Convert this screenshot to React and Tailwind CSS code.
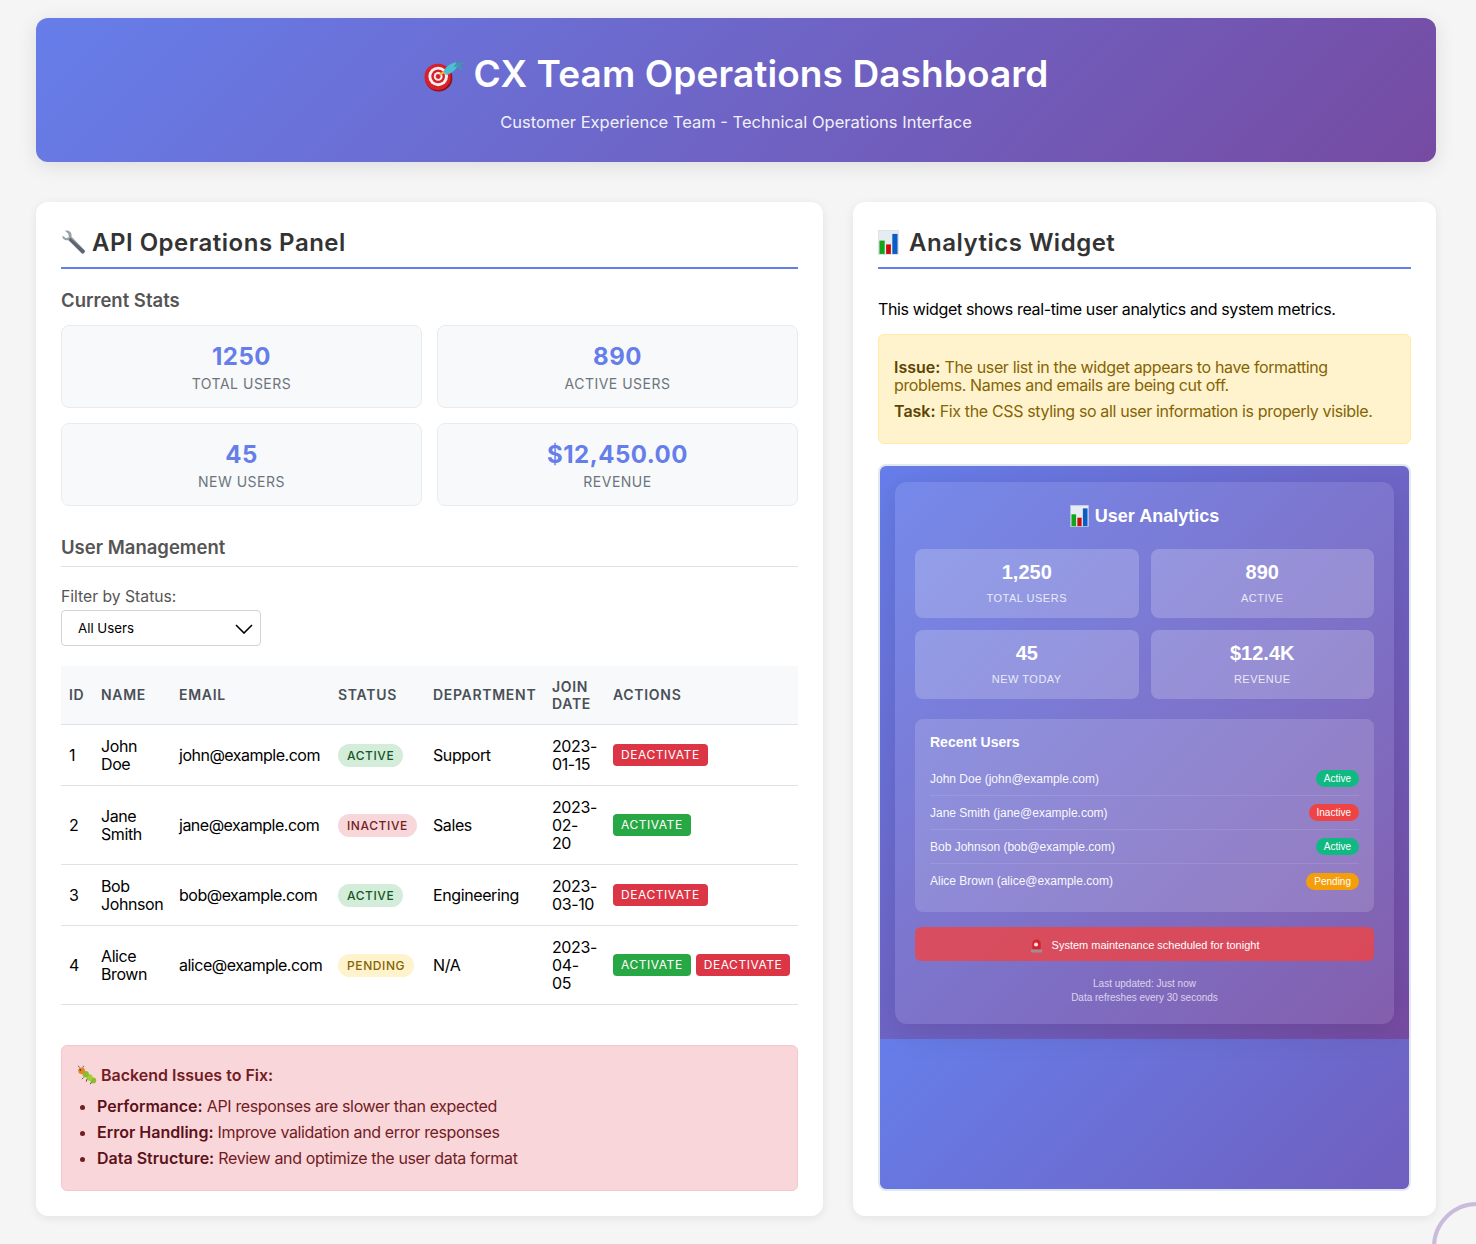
import React from "react";

const sans = "font-['Inter','Noto_Sans',sans-serif]";

const TargetIcon = ({ className }) => (
  <svg viewBox="0 0 44 36" className={className}>
    <circle cx="15" cy="22" r="14" fill="#8f0f14" />
    <circle cx="14" cy="21" r="13.500" fill="#d9202a" />
    <circle cx="14.500" cy="20.500" r="10" fill="#f7f1f1" />
    <circle cx="14.500" cy="20.500" r="7" fill="#d9202a" />
    <circle cx="14.500" cy="20.500" r="4.500" fill="#f7f1f1" />
    <circle cx="14.500" cy="20.500" r="2.500" fill="#d9202a" />
    <path d="M16 19l5-3.500" stroke="#e8b93a" strokeWidth="2.200" />
    <path d="M20 15c3-5 7-8 13-9l1.500 3c-2 5-7 9-12 10z" fill="#4cc0cf" />
    <path d="M31 1l3 6 9-1-6 3 3 6-7-5-3 1 3-4z" fill="#3d9aa8" />
  </svg>
);

const WrenchIcon = ({ className }) => (
  <svg viewBox="0 0 24 24" className={className}>
    <path d="M1.500 5.500L5 8l2.500-1L7 3.500 3.800.8C6.500-.2 9.300 1 10 3.800c.2.900.2 1.700 0 2.500l13 13.400c.9 1-1.800 3.700-2.800 2.800L7 9.800c-.9.2-1.800.2-2.700-.1C2 8.900 1 7.500 1.500 5.500z" fill="#98a0a8" />
    <path d="M9 7.500l13.800 12.300c.6 1-1.700 3.500-2.600 2.700L7.500 9.500z" fill="#5d6670" />
  </svg>
);

const ChartIcon = ({ className }) => (
  <svg viewBox="0 0 22 26" className={className}>
    <rect x=".5" y=".5" width="21" height="25" fill="#e6edf2" stroke="#cdd6dd" strokeWidth=".6" />
    <rect x="1.500" y="11" width="5.500" height="14" fill="#12a51c" />
    <rect x="8.500" y="15" width="5" height="10" fill="#c90d0d" />
    <rect x="15" y="4" width="5.500" height="21" fill="#0b5cc4" />
  </svg>
);

const BugIcon = ({ className }) => (
  <svg viewBox="0 0 24 24" className={className}>
    <circle cx="19.500" cy="18.500" r="3.500" fill="#8dbb2e" />
    <circle cx="15" cy="15" r="3.800" fill="#a4cc3a" />
    <circle cx="10.500" cy="11" r="3.800" fill="#8dbb2e" />
    <circle cx="5.500" cy="7" r="4" fill="#e0852c" />
    <circle cx="4" cy="6" r="1" fill="#33230f" />
    <path d="M3 3L1.500 1M7 3l1-2" stroke="#4a3a1a" strokeWidth="1" />
    <path d="M12 17l-1 3M17 21l-1 2M8 15l-2 2" stroke="#4a5a1a" strokeWidth="1.200" />
  </svg>
);

const SirenIcon = ({ className }) => (
  <svg viewBox="0 0 14 16" className={className}>
    <rect x="1" y="12" width="12" height="3.500" rx="1" fill="#9b8f95" />
    <path d="M2.500 12V6a4.500 4.500 0 019 0v6z" fill="#d6222e" />
    <circle cx="6.500" cy="7" r="2.200" fill="#fde6e6" />
  </svg>
);

const stats = [
  ["1250", "Total Users"],
  ["890", "Active Users"],
  ["45", "New Users"],
  ["$12,450.00", "Revenue"],
];

const users = [
  { id: 1, name: "John Doe", email: "john@example.com", status: "active", dept: "Support", date: ["2023-", "01-15"], actions: ["deactivate"] },
  { id: 2, name: "Jane Smith", email: "jane@example.com", status: "inactive", dept: "Sales", date: ["2023-", "02-", "20"], actions: ["activate"] },
  { id: 3, name: "Bob Johnson", email: "bob@example.com", status: "active", dept: "Engineering", date: ["2023-", "03-10"], actions: ["deactivate"] },
  { id: 4, name: "Alice Brown", email: "alice@example.com", status: "pending", dept: "N/A", date: ["2023-", "04-", "05"], actions: ["activate", "deactivate"] },
];

const badgeStyles = {
  active: "bg-[#d4edda] text-[#155724]",
  inactive: "bg-[#f8d7da] text-[#721c24]",
  pending: "bg-[#fff3cd] text-[#856404]",
};

const widgetStats = [
  ["1,250", "Total Users"],
  ["890", "Active"],
  ["45", "New Today"],
  ["$12.4K", "Revenue"],
];

const recentUsers = [
  ["John Doe (john@example.com)", "Active", "bg-[#10b981]"],
  ["Jane Smith (jane@example.com)", "Inactive", "bg-[#ef4444]"],
  ["Bob Johnson (bob@example.com)", "Active", "bg-[#10b981]"],
  ["Alice Brown (alice@example.com)", "Pending", "bg-[#f59e0b]"],
];

function PanelTitle({ icon, children }) {
  return (
    <h2 className="flex items-center h-[43px] pb-[8px] border-b-2 border-[#667eea] text-[24px] leading-[29px] font-semibold text-[#333] tracking-[0.5px]">
      {icon}
      {children}
    </h2>
  );
}

function UserTable() {
  return (
    <table className="w-full table-fixed border-collapse mt-5 text-[16px] leading-[18px] tracking-[-0.4px] text-black">
      <colgroup>
        <col className="w-[32px]" />
        <col className="w-[78px]" />
        <col className="w-[159px]" />
        <col className="w-[95px]" />
        <col className="w-[119px]" />
        <col className="w-[61px]" />
        <col />
      </colgroup>
      <thead>
        <tr className="bg-[#f8f9fa] border-b border-[#dee2e6] h-[58px] text-left text-[14px] leading-[17px] uppercase tracking-[0.7px] text-[#495057]">
          <th className="px-2 font-semibold">ID</th>
          <th className="px-2 font-semibold">Name</th>
          <th className="px-2 font-semibold">Email</th>
          <th className="px-2 font-semibold">Status</th>
          <th className="px-2 font-semibold">Department</th>
          <th className="px-2 font-semibold">Join Date</th>
          <th className="px-2 font-semibold">Actions</th>
        </tr>
      </thead>
      <tbody>
        {users.map((u) => (
          <tr key={u.id} className="border-b border-[#dee2e6]">
            <td className="px-2 py-3">{u.id}</td>
            <td className="px-2 py-3">{u.name}</td>
            <td className="px-2 py-3 whitespace-nowrap tracking-[-0.5px]">{u.email}</td>
            <td className="px-2 py-3">
              <span className={`inline-block align-middle mt-[2px] px-[9px] h-[23px] leading-[24px] rounded-xl text-[12px] font-medium uppercase tracking-[0.6px] ${badgeStyles[u.status]}`}>
                {u.status}
              </span>
            </td>
            <td className="px-2 py-3">{u.dept}</td>
            <td className="px-2 py-3">
              {u.date.map((part) => (
                <span key={part} className="block">{part}</span>
              ))}
            </td>
            <td className="px-2 py-3">
              <div className="flex gap-[5px]">
                {u.actions.map((a) => (
                  <button
                    key={a}
                    className={`h-[22px] px-2 rounded text-white text-[12px] uppercase tracking-[0.55px] ${a === "activate" ? "bg-[#28a745]" : "bg-[#dc3545]"}`}
                  >
                    {a}
                  </button>
                ))}
              </div>
            </td>
          </tr>
        ))}
      </tbody>
    </table>
  );
}

function Widget() {
  return (
    <div className="mt-5 h-[727px] border-2 border-[#e2e8f0] rounded-lg overflow-hidden bg-[linear-gradient(135deg,#667eea_0%,#764ba2_100%)] bg-[length:100%_573px] pt-[16px] pl-[15px] font-['Liberation_Sans',Arial,sans-serif] text-white">
      <div className="w-[499px] h-[542px] rounded-xl bg-white/10 shadow-[0_8px_32px_rgba(0,0,0,0.1)] p-5">
        <h3 className="flex items-center justify-center h-[26px] mt-[1px] text-[18px] font-bold leading-[26px]">
          <ChartIcon className="w-[19px] h-[22px] mr-[6px]" />
          User Analytics
        </h3>
        <div className="grid grid-cols-2 gap-3 mt-[20px]">
          {widgetStats.map(([value, label]) => (
            <div key={label} className="h-[69px] rounded-lg bg-white/20 text-center pt-[10px]">
              <div className="text-[20px] leading-[26px] font-bold">{value}</div>
              <div className="mt-[6px] text-[11px] leading-[14px] uppercase tracking-[0.5px] opacity-80">{label}</div>
            </div>
          ))}
        </div>
        <div className="mt-5 h-[193px] rounded-lg bg-white/15 p-[15px]">
          <h4 className="text-[14px] leading-[16px] font-bold">Recent Users</h4>
          <div className="mt-[12px]">
            {recentUsers.map(([text, status, color], i) => (
              <div key={text} className={`flex items-center justify-between h-[34px] text-[12px] ${i < 3 ? "border-b border-white/10" : ""}`}>
                <span className="opacity-95">{text}</span>
                <span className={`rounded-[10px] h-[17px] leading-[17px] px-2 text-[10px] font-medium ${color}`}>{status}</span>
              </div>
            ))}
          </div>
        </div>
        <div className="flex items-center justify-center h-[34px] mt-[15px] pt-[2px] rounded-md bg-[rgba(239,68,68,0.8)] text-[11px]">
          <SirenIcon className="w-[13px] h-[15px] mr-[9px]" />
          System maintenance scheduled for tonight
        </div>
        <div className="mt-[16px] text-center text-[10px] leading-[14px] opacity-70">
          <div>Last updated: Just now</div>
          <div>Data refreshes every 30 seconds</div>
        </div>
      </div>
    </div>
  );
}

export default function App() {
  return (
    <div className={`min-h-screen bg-[#f5f5f5] pt-[18px] pl-9 pr-10 ${sans}`}>
      <header className="h-[144px] rounded-xl bg-[linear-gradient(135deg,#667eea_0%,#764ba2_100%)] text-white text-center pt-[32px] shadow-[0_4px_20px_rgba(0,0,0,0.1)]">
        <h1 className="flex items-center justify-center h-[48px] text-[37px] leading-[48px] font-semibold tracking-[0.1px]">
          <TargetIcon className="w-[43px] h-[36px] mr-[7px]" />
          CX Team Operations Dashboard
        </h1>
        <p className="mt-[14px] text-[16.500px] leading-[20px] opacity-90">Customer Experience Team - Technical Operations Interface</p>
      </header>

      <main className="grid grid-cols-[787px_583px] gap-[30px] mt-10">
        <section className="h-[1014px] rounded-xl bg-white shadow-[0_2px_10px_rgba(0,0,0,0.08)] px-[25px] pt-[24px]">
          <PanelTitle icon={<WrenchIcon className="w-[25px] h-[25px] mr-[6px]" />}>API Operations Panel</PanelTitle>

          <h3 className="mt-[20px] text-[18.500px] leading-[22px] font-semibold text-[#555]">Current Stats</h3>
          <div className="grid grid-cols-2 gap-[15px] mt-[14px]">
            {stats.map(([value, label]) => (
              <div key={label} className="h-[83px] rounded-lg bg-[#f8f9fa] border border-[#e9ecef] text-center pt-[16px]">
                <div className="text-[24px] leading-[29px] font-bold text-[#667eea] tracking-[0.5px]">{value}</div>
                <div className="mt-[4px] text-[14px] leading-[17px] uppercase tracking-[0.5px] text-[#6c757d]">{label}</div>
              </div>
            ))}
          </div>

          <h3 className="mt-[30px] pb-[8px] border-b border-[#dee2e6] text-[18.500px] leading-[22px] font-semibold text-[#555]">User Management</h3>
          <label className="block mt-[20px] text-[15.700px] leading-[20px] text-[#555]">Filter by Status:</label>
          <div className="mt-[3px] flex items-center justify-between w-[200px] h-[36px] rounded border border-[#ced4da] bg-white pl-4 pr-[7px] pt-[1px] text-[13.300px] text-black">
            All Users
            <svg viewBox="0 0 18 10" className="w-[18px] h-[10px]" fill="none" stroke="currentColor" strokeWidth="1.600">
              <path d="M1 1l8 8 8-8" />
            </svg>
          </div>

          <UserTable />

          <div className="mt-[40px] h-[146px] rounded-md bg-[#f9d6da] border border-[#f5c6cb] px-[15px] pt-[19px] text-[#721c24]">
            <h4 className="flex items-center text-[16px] leading-[20px] font-semibold">
              <BugIcon className="w-[20px] h-[20px] mr-[4px]" />
              Backend Issues to Fix:
            </h4>
            <ul className="mt-[8px] pl-[20px] list-disc text-[16px] leading-[26px] tracking-[-0.36px]">
              <li><strong className="font-semibold tracking-normal text-[#5c1219]">Performance:</strong> API responses are slower than expected</li>
              <li><strong className="font-semibold tracking-normal text-[#5c1219]">Error Handling:</strong> Improve validation and error responses</li>
              <li><strong className="font-semibold tracking-normal text-[#5c1219]">Data Structure:</strong> Review and optimize the user data format</li>
            </ul>
          </div>
        </section>

        <section className="h-[1014px] rounded-xl bg-white shadow-[0_2px_10px_rgba(0,0,0,0.08)] px-[25px] pt-[24px]">
          <PanelTitle icon={<ChartIcon className="w-[21px] h-[25px] mr-[10px]" />}>Analytics Widget</PanelTitle>
          <p className="mt-[30px] text-[16px] leading-[20px] tracking-[-0.36px] text-black">This widget shows real-time user analytics and system metrics.</p>
          <div className="mt-[15px] h-[110px] rounded-md bg-[#fff3cd] border border-[#ffeaa7] px-[15px] pt-[23px] text-[16px] leading-[18px] tracking-[-0.36px] text-[#856404]">
            <p><strong className="font-semibold tracking-normal text-[#5c4503]">Issue:</strong> The user list in the widget appears to have formatting problems. Names and emails are being cut off.</p>
            <p className="mt-2"><strong className="font-semibold tracking-normal text-[#5c4503]">Task:</strong> Fix the CSS styling so all user information is properly visible.</p>
          </div>
          <Widget />
        </section>
      </main>

      <div className="fixed left-[1432px] top-[1202px] w-[90px] h-[90px] rounded-full border-4 border-[#c9bbdc]" />
    </div>
  );
}
